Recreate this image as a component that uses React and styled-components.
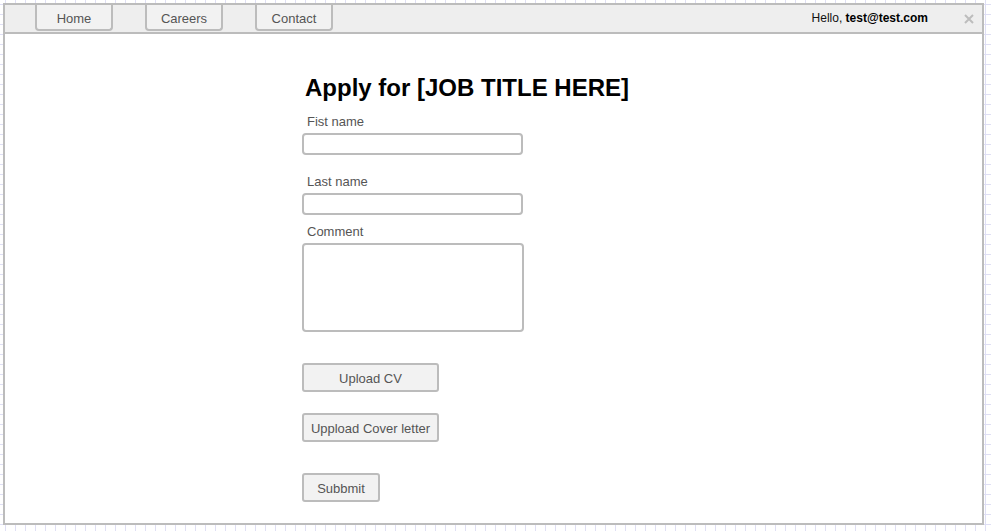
import React from 'react'
import styled, { createGlobalStyle } from 'styled-components'

const GlobalStyle = createGlobalStyle`
  html, body {
    margin: 0;
    padding: 0;
  }
  body {
    font-family: "Liberation Sans", Arial, sans-serif;
    background-color: #fff;
    background-image:
      linear-gradient(to right, #dfdff5 1px, transparent 1px),
      linear-gradient(to bottom, #dfdff5 1px, transparent 1px);
    background-size: 10px 10px;
    background-position: 5px 4px;
    height: 531px;
    overflow: hidden;
  }
`

const Frame = styled.div`
  margin: 3px 0 0 3px;
  width: 981px;
  height: 522px;
  box-sizing: border-box;
  border: 2px solid #bcbcbc;
  background: #fff;
  display: flex;
  flex-direction: column;
`

const Header = styled.header`
  height: 27px;
  flex: none;
  background: #eeeeee;
  border-bottom: 2px solid #bcbcbc;
  display: flex;
  align-items: flex-start;
  padding-left: 30px;
`

const NavButton = styled.button`
  width: 78px;
  height: 26px;
  margin-right: 32px;
  box-sizing: border-box;
  border: 2px solid #bcbcbc;
  border-top: none;
  border-radius: 0 0 4px 4px;
  background: #f2f2f2;
  color: #555;
  font-family: inherit;
  font-size: 13px;
  padding: 2px 0 0;
  display: flex;
  align-items: center;
  justify-content: center;
`

const Greeting = styled.div`
  margin-left: auto;
  font-size: 12px;
  line-height: 27px;
  color: #111;

  > b {
    font-weight: bold;
    color: #000;
  }
`

const Close = styled.svg`
  width: 10px;
  height: 10px;
  margin: 9px 8px 0 36px;
  flex: none;
`

const Content = styled.main`
  flex: 1;
  display: flex;
  flex-direction: column;
  align-items: flex-start;
  padding-left: 297px;
`

const Title = styled.h1`
  margin: 40px 0 0 3px;
  font-size: 24px;
  line-height: 28px;
  font-weight: bold;
  color: #000;
`

const Label = styled.label`
  display: block;
  margin: ${p => p.$top}px 0 0 5px;
  font-size: 13px;
  line-height: 16px;
  color: #555;
`

const TextInput = styled.input`
  display: block;
  margin-top: 3px;
  width: 221px;
  height: 22px;
  box-sizing: border-box;
  border: 2px solid #bcbcbc;
  border-radius: 4px;
  background: #fff;
  padding: 0 4px;
  outline: none;
`

const TextArea = styled.textarea`
  display: block;
  margin-top: 3px;
  width: 222px;
  height: 89px;
  box-sizing: border-box;
  border: 2px solid #bcbcbc;
  border-radius: 4px;
  background: #fff;
  resize: none;
  outline: none;
`

const Button = styled.button`
  margin-top: ${p => p.$top}px;
  width: ${p => p.$width}px;
  height: 29px;
  box-sizing: border-box;
  border: 2px solid #bcbcbc;
  border-radius: 3px;
  background: #f2f2f2;
  color: #555;
  font-family: inherit;
  font-size: 13px;
  padding: 1px 0 0;
`

export default function App() {
  return (
    <>
      <GlobalStyle />
      <Frame>
        <Header>
          <NavButton>Home</NavButton>
          <NavButton>Careers</NavButton>
          <NavButton>Contact</NavButton>
          <Greeting>
            Hello, <b>test@test.com</b>
          </Greeting>
          <Close viewBox="0 0 10 10">
            <path d="M1 1L9 9M9 1L1 9" stroke="#bdbdbd" strokeWidth="2" />
          </Close>
        </Header>
        <Content>
          <Title>Apply for [JOB TITLE HERE]</Title>
          <Label $top={12}>Fist name</Label>
          <TextInput />
          <Label $top={19}>Last name</Label>
          <TextInput />
          <Label $top={9}>Comment</Label>
          <TextArea />
          <Button $top={31} $width={137}>Upload CV</Button>
          <Button $top={21} $width={137}>Uppload Cover letter</Button>
          <Button $top={31} $width={78}>Subbmit</Button>
        </Content>
      </Frame>
    </>
  )
}
